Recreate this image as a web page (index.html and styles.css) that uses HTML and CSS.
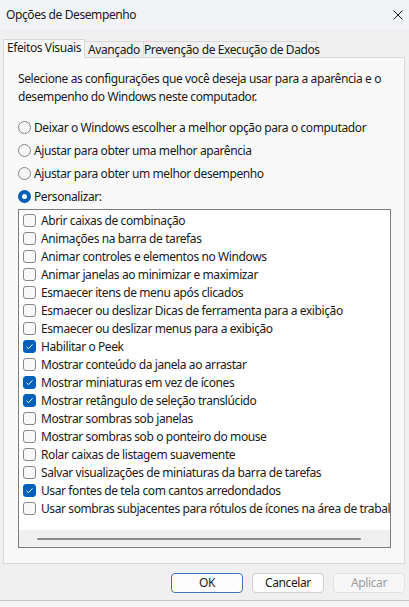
FILE: index.html
```html
<!DOCTYPE html>
<html lang="pt-BR">
<head>
<meta charset="utf-8">
<title>Opções de Desempenho</title>
<link rel="stylesheet" href="styles.css">
</head>
<body>
<div class="window">
  <div class="titlebar">
    <span class="title">Opções de Desempenho</span>
    <svg class="close" width="10" height="10" viewBox="0 0 10 10"><path d="M0.5 0.5 L9.5 9.5 M9.5 0.5 L0.5 9.5" stroke="#1b1b1b" stroke-width="1" fill="none"/></svg>
  </div>
  <div class="tabs">
    <div class="tab active t1">Efeitos Visuais</div>
    <div class="tab t2">Avançado</div>
    <div class="tab t3">Prevenção de Execução de Dados</div>
  </div>
  <div class="panel">
    <p class="desc">Selecione as configurações que você deseja usar para a aparência e o desempenho do Windows neste computador.</p>
    <div class="radios">
      <div class="radio-row"><span class="radio"></span>Deixar o Windows escolher a melhor opção para o computador</div>
      <div class="radio-row"><span class="radio"></span>Ajustar para obter uma melhor aparência</div>
      <div class="radio-row"><span class="radio"></span>Ajustar para obter um melhor desempenho</div>
      <div class="radio-row"><span class="radio on"></span>Personalizar:</div>
    </div>
    <div class="listbox">
      <div class="items">
        <div class="item"><span class="cb"></span>Abrir caixas de combinação</div>
        <div class="item"><span class="cb"></span>Animações na barra de tarefas</div>
        <div class="item"><span class="cb"></span>Animar controles e elementos no Windows</div>
        <div class="item"><span class="cb"></span>Animar janelas ao minimizar e maximizar</div>
        <div class="item"><span class="cb"></span>Esmaecer itens de menu após clicados</div>
        <div class="item"><span class="cb"></span>Esmaecer ou deslizar Dicas de ferramenta para a exibição</div>
        <div class="item"><span class="cb"></span>Esmaecer ou deslizar menus para a exibição</div>
        <div class="item"><span class="cb on"><svg width="13" height="13" viewBox="0 0 13 13"><path d="M3.5 6.8 L5.5 8.7 L9.5 4.3" stroke="#fff" stroke-width="1" fill="none"/></svg></span>Habilitar o Peek</div>
        <div class="item"><span class="cb"></span>Mostrar conteúdo da janela ao arrastar</div>
        <div class="item"><span class="cb on"><svg width="13" height="13" viewBox="0 0 13 13"><path d="M3.5 6.8 L5.5 8.7 L9.5 4.3" stroke="#fff" stroke-width="1" fill="none"/></svg></span>Mostrar miniaturas em vez de ícones</div>
        <div class="item"><span class="cb on"><svg width="13" height="13" viewBox="0 0 13 13"><path d="M3.5 6.8 L5.5 8.7 L9.5 4.3" stroke="#fff" stroke-width="1" fill="none"/></svg></span>Mostrar retângulo de seleção translúcido</div>
        <div class="item"><span class="cb"></span>Mostrar sombras sob janelas</div>
        <div class="item"><span class="cb"></span>Mostrar sombras sob o ponteiro do mouse</div>
        <div class="item"><span class="cb"></span>Rolar caixas de listagem suavemente</div>
        <div class="item"><span class="cb"></span>Salvar visualizações de miniaturas da barra de tarefas</div>
        <div class="item"><span class="cb on"><svg width="13" height="13" viewBox="0 0 13 13"><path d="M3.5 6.8 L5.5 8.7 L9.5 4.3" stroke="#fff" stroke-width="1" fill="none"/></svg></span>Usar fontes de tela com cantos arredondados</div>
        <div class="item"><span class="cb"></span>Usar sombras subjacentes para rótulos de ícones na área de trabalho</div>
      </div>
      <div class="hscroll"><div class="thumb"></div></div>
    </div>
  </div>
  <div class="buttons">
    <button class="btn default">OK</button>
    <button class="btn">Cancelar</button>
    <button class="btn disabled">Aplicar</button>
  </div>
</div>
</body>
</html>
```

FILE: styles.css
```css
* { box-sizing: border-box; }
html, body { margin: 0; padding: 0; }
body {
  width: 409px;
  height: 607px;
  overflow: hidden;
  background: #f5f5f5;
  font-family: "Noto Sans", "Open Sans", sans-serif;
  font-size: 12px;
  letter-spacing: -0.4px;
  color: #1a1a1a;
}
.window {
  width: 409px;
  height: 601px;
  background: #f0f0f0;
  border-bottom: 1px solid #c4c4c4;
  display: flex;
  flex-direction: column;
}
.titlebar {
  height: 30px;
  flex: none;
  background: #f2f3f6;
  display: flex;
  align-items: center;
  justify-content: space-between;
  padding: 0 6px 1px 6px;
}
.title { line-height: 16px; }
.close { display: block; margin-right: 0; }
.tabs {
  display: flex;
  align-items: flex-end;
  padding: 0 3px;
  margin-top: 9px;
  margin-bottom: -1px;
  position: relative;
  z-index: 1;
  height: 19px;
  flex: none;
}
.tab {
  height: 17px;
  border: 1px solid #d9d9d9;
  background: #f0f0f0;
  text-align: center;
  line-height: 16px;
  white-space: nowrap;
  margin-left: -1px;
}
.tab.active {
  height: 19px;
  border-bottom: none;
  background: #f9f9f9;
  margin-left: 0;
  line-height: 16px;
}
.t1 { width: 82px; }
.t2 { width: 60px; }
.t3 { width: 174px; }
.panel {
  margin: 0 4px 0 3px;
  height: 507px;
  flex: none;
  background: #f9f9f9;
  border: 1px solid #d9d9d9;
  padding: 12px 12px 0 14px;
}
.desc {
  margin: 0;
  line-height: 18px;
}
.radios { margin-top: 10px; }
.radio-row {
  height: 23px;
  display: flex;
  align-items: center;
  white-space: nowrap;
}
.radio {
  width: 13px;
  height: 13px;
  border-radius: 50%;
  border: 1px solid #858585;
  background: #f6f6f6;
  margin-right: 3px;
  flex: none;
}
.radio.on {
  border: 4px solid #005fb8;
  background: #ffffff;
}
.listbox {
  margin-top: 1px;
  width: 373px;
  height: 339px;
  border: 1px solid #7d7d7d;
  background: #ffffff;
  display: flex;
  flex-direction: column;
}
.items {
  flex: 1;
  padding-top: 1px;
  overflow: hidden;
}
.item {
  height: 18px;
  display: flex;
  align-items: center;
  white-space: nowrap;
  padding-left: 4px;
}
.cb {
  width: 13px;
  height: 13px;
  border: 1px solid #878787;
  border-radius: 3px;
  background: #f9f9f9;
  margin-right: 5px;
  flex: none;
  position: relative;
}
.cb.on {
  border-color: #005fb8;
  background: #005fb8;
}
.cb svg {
  display: block;
  margin: -1px;
}
.hscroll {
  height: 17px;
  flex: none;
  background: #f0f0f0;
  display: flex;
  align-items: center;
  padding-left: 18px;
}
.thumb {
  width: 324px;
  height: 2px;
  border-radius: 1px;
  background: #8a8a8a;
}
.buttons {
  display: flex;
  justify-content: flex-end;
  gap: 9px;
  padding: 0 4px 0 0;
  margin-top: 9px;
}
.btn {
  width: 72px;
  height: 20px;
  border-radius: 4px;
  border: 1px solid #d0d0d0;
  background: #fdfdfd;
  font-family: inherit;
  font-size: 12px;
  letter-spacing: -0.4px;
  color: #1a1a1a;
  padding: 0;
  line-height: 16px;
}
.btn.default {
  border-color: #3f73bd;
}
.btn.disabled {
  background: #f7f7f7;
  border-color: #e3e3e3;
  color: #9d9d9d;
}
```
